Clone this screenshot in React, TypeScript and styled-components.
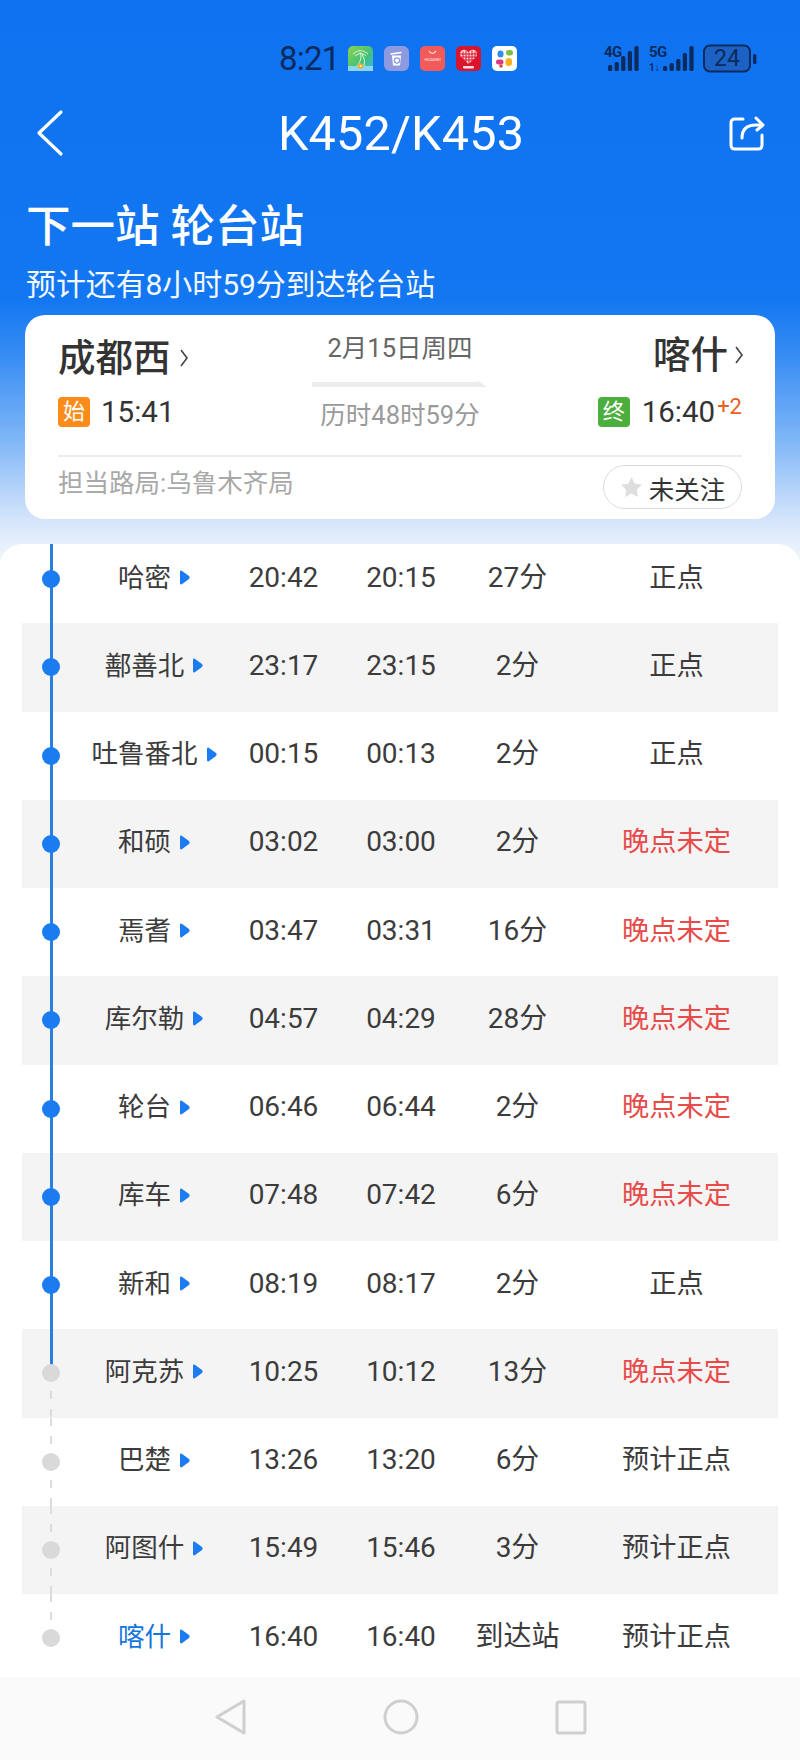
import React from "react";
import styled, { createGlobalStyle } from "styled-components";

const FONT = `Roboto, "Noto Sans CJK SC", sans-serif`;

const Global = createGlobalStyle`
  html, body { margin: 0; padding: 0; background: #fff; }
  * { box-sizing: border-box; }
`;

const Page = styled.div`
  width: 800px;
  height: 1760px;
  overflow: hidden;
  display: flex;
  flex-direction: column;
  font-family: ${FONT};
  color: #3a3a3a;
  background: linear-gradient(180deg, #0f72f0 0, #1277f1 300px, #3a8ff4 360px, #80b6f7 440px, #d5e5fb 520px, #f2f6fd 560px);
`;

const StatusBar = styled.div`
  height: 102px;
  padding: 44px 0 0 279px;
  display: flex;
  align-items: flex-start;
`;
const Clock = styled.div`
  width: 69px;
  height: 30px;
  line-height: 30px;
  font-size: 33px;
  letter-spacing: -0.8px;
  color: #0b2a5e;
`;
const AppIcons = styled.div`
  display: flex;
  gap: 11px;
  margin-top: 2px;
`;
const Signals = styled.div`
  margin-left: 87px;
  margin-top: -3px;
  display: flex;
`;

const Nav = styled.div`
  height: 60px;
  padding: 0 34px 0 36px;
  display: grid;
  grid-template-columns: 1fr auto 1fr;
  align-items: center;
`;
const NavRight = styled.div`
  display: flex;
  justify-content: flex-end;
`;
const NavLeft = styled.div`
  display: flex;
`;
const Title = styled.div`
  font-size: 48.5px;
  line-height: 60px;
  padding-top: 2px;
  color: #fff;
  letter-spacing: 0.2px;
`;
const Headline = styled.div`
  margin: 35px 0 0 26px;
  height: 60px;
  line-height: 60px;
  font-size: 44.5px;
  font-weight: 500;
  color: #fff;
`;
const Subline = styled.div`
  margin: 8px 0 0 26px;
  height: 40px;
  line-height: 40px;
  font-size: 30px;
  color: #f4f8ff;
  letter-spacing: -0.1px;
`;

const SummaryCard = styled.section`
  margin: 10px 25px 0;
  height: 204px;
  padding: 0 33px;
  background: #fff;
  border-radius: 20px;
`;
const RouteGrid = styled.div`
  display: grid;
  grid-template-columns: 1fr auto 1fr;
  height: 118px;
`;
const Endpoint = styled.div<{ $end?: boolean }>`
  display: flex;
  flex-direction: column;
  align-items: ${(p) => (p.$end ? "flex-end" : "flex-start")};
  padding-top: ${(p) => (p.$end ? 19 : 22)}px;
`;
const CityLine = styled.div<{ $end?: boolean }>`
  height: 42px;
  display: flex;
  align-items: center;
  gap: ${(p) => (p.$end ? 6 : 8)}px;
  margin-right: ${(p) => (p.$end ? -2 : 0)}px;
`;
const City = styled.span`
  font-size: 37.5px;
  line-height: 42px;
  font-weight: 500;
  color: #333;
`;
const TimeLine = styled.div<{ $end?: boolean }>`
  height: 42px;
  margin-top: ${(p) => (p.$end ? 15 : 12)}px;
  display: flex;
  align-items: center;
  gap: ${(p) => (p.$end ? 12 : 11)}px;
`;
const Badge = styled.span<{ $color: string }>`
  width: 32px;
  height: 30px;
  border-radius: 4px;
  background: ${(p) => p.$color};
  color: #fff;
  font-size: 22px;
  line-height: 30px;
  text-align: center;
`;
const BigTime = styled.span`
  font-size: 29.5px;
  line-height: 40px;
  color: #333;
`;
const PlusDay = styled.sup`
  font-size: 22px;
  line-height: 1;
  color: #e5611c;
  margin-left: 2px;
  vertical-align: 8px;
`;
const Middle = styled.div`
  width: 176px;
  padding-top: 18px;
  display: flex;
  flex-direction: column;
  align-items: center;
`;
const DateText = styled.div`
  height: 30px;
  line-height: 30px;
  font-size: 25.5px;
  color: #666;
  white-space: nowrap;
`;
const ArrowWrap = styled.div`
  margin-top: 17px;
  height: 6px;
  display: flex;
`;
const Duration = styled.div`
  margin-top: 14px;
  height: 30px;
  line-height: 30px;
  font-size: 25.5px;
  color: #9a9a9a;
  white-space: nowrap;
`;
const Divider = styled.div`
  margin-top: 22px;
  height: 2px;
  background: #ececec;
`;
const CardFoot = styled.div`
  margin-top: 8px;
  display: flex;
  align-items: center;
  justify-content: space-between;
`;
const Bureau = styled.div`
  font-size: 25.5px;
  line-height: 30px;
  color: #a8a8a8;
  padding-bottom: 8px;
`;
const FollowPill = styled.div`
  width: 139px;
  height: 44px;
  border: 1px solid #dcdcdc;
  border-radius: 22px;
  display: flex;
  align-items: center;
  justify-content: center;
  gap: 6px;
  font-size: 25.5px;
  color: #333;
`;

const ListCard = styled.section`
  margin-top: 25px;
  height: 1133px;
  background: #fff;
  border-radius: 22px 22px 0 0;
  overflow: hidden;
`;
const Rows = styled.div`
  margin-top: -9px;
`;
const Row = styled.div<{ $shaded: boolean }>`
  height: 88.25px;
  margin: 0 22px;
  display: grid;
  grid-template-columns: 60px 144px 115px 120px 113px 1fr;
  align-items: center;
  text-align: center;
  background: ${(p) => (p.$shaded ? "#f4f4f4" : "transparent")};
`;
const dashed = "repeating-linear-gradient(180deg, #dcdcdc 0 8px, transparent 8px 18px)";
const Rail = styled.div`
  position: relative;
  align-self: stretch;
`;
const RailLine = styled.div<{ $part: "top" | "bottom"; $kind: "solid" | "dashed" }>`
  position: absolute;
  left: 28px;
  width: ${(p) => (p.$kind === "solid" ? 2.5 : 2)}px;
  top: ${(p) => (p.$part === "top" ? "0" : "50%")};
  height: 50%;
  background: ${(p) => (p.$kind === "solid" ? "#2a80dc" : dashed)};
`;
const Dot = styled.div<{ $passed: boolean }>`
  position: absolute;
  left: 20px;
  top: 50%;
  width: 18px;
  height: 18px;
  margin-top: -9px;
  border-radius: 50%;
  background: ${(p) => (p.$passed ? "#1a7cf0" : "#d9d9d9")};
`;
const Cell = styled.div<{ $color?: string }>`
  font-size: 28px;
  line-height: 36px;
  padding-bottom: 3px;
  white-space: nowrap;
  color: ${(p) => p.$color || "#3c3c3c"};
`;
const Station = styled(Cell)`
  font-size: 26.5px;
  display: flex;
  align-items: center;
  justify-content: center;
  gap: 9px;
`;
const StatusCell = styled(Cell)`
  font-size: 27.2px;
  padding-left: 1px;
`;
const NavBar = styled.footer`
  flex: 1;
  background: #fafafa;
  padding: 22px 0 0 215px;
  display: flex;
  align-items: flex-start;
`;
const NavSlot = styled.div<{ $gap: number }>`
  margin-left: ${(p) => p.$gap}px;
  height: 36px;
  display: flex;
`;

const Chevron = () => (
  <svg width="10" height="22" viewBox="0 0 10 22" fill="none" stroke="#444" strokeWidth="1.6">
    <path d="M2 3 L8 11 L2 19" />
  </svg>
);

const Tri = () => (
  <svg width="10" height="15" viewBox="0 0 10 15">
    <path d="M1.8 0.8 L9 6 Q10.2 7.5 9 9 L1.8 14.2 Q0 15 0 13 V2 Q0 0 1.8 0.8 Z" fill="#1a7cf0" />
  </svg>
);

const GreenApp = () => (
  <svg width="25" height="25" viewBox="0 0 25 25">
    <defs>
      <linearGradient id="ga" x1="0" y1="0" x2="1" y2="1">
        <stop offset="0" stopColor="#8fd24a" />
        <stop offset="0.6" stopColor="#41c07e" />
        <stop offset="1" stopColor="#3cb8e6" />
      </linearGradient>
    </defs>
    <rect width="25" height="25" rx="5" fill="url(#ga)" />
    <path d="M5 8 Q12 1 20 8 M7 10 Q13 5 18 10 M12 6 Q15 13 9 20 M14 8 Q18 14 16 20" fill="none" stroke="#e8f8d8" strokeWidth="0.9" />
    <rect y="20" width="25" height="5" fill="#8ad8ee" />
    <circle cx="12.5" cy="20" r="2.8" fill="#f7a823" />
    <circle cx="12.5" cy="20" r="1" fill="#fff" />
  </svg>
);
const TrashApp = () => (
  <svg width="25" height="25" viewBox="0 0 25 25">
    <rect width="25" height="25" rx="6" fill="#8e9ae0" />
    <path d="M7 8 L17 6.5" stroke="#fff" strokeWidth="1.6" strokeLinecap="round" />
    <path d="M8 9.5 H17 L16 19.5 H9 Z" fill="#fff" />
    <circle cx="13" cy="14.5" r="2.6" fill="none" stroke="#8e9ae0" strokeWidth="1.3" />
  </svg>
);
const ShopApp = () => (
  <svg width="25" height="25" viewBox="0 0 25 25">
    <rect width="25" height="25" rx="5" fill="#f35b5b" />
    <path d="M9 5 Q12.5 10 16 5" fill="none" stroke="#fff" strokeWidth="1.1" />
    <text x="12.5" y="15" textAnchor="middle" fontSize="4.4" fontFamily="Roboto, sans-serif" fill="#ffe9e9">HUAWEI</text>
  </svg>
);
const HeartApp = () => (
  <svg width="25" height="25" viewBox="0 0 25 25">
    <rect width="25" height="25" rx="5" fill="#d9142c" />
    <path d="M12.5 18 L4.5 10.5 Q2.8 5 7.5 3.8 Q11 3.4 12.5 6.5 Q14 3.4 17.5 3.8 Q22.2 5 20.5 10.5 Z" fill="#fbd9d9" />
    <path d="M7 5.5 V14 M10 4.5 V16.5 M13 6.5 V18 M16 4.5 V15.5 M19 5.5 V12 M4 8 H21 M4.5 11 H20.5 M7 14 H18" stroke="#d9142c" strokeWidth="1" />
    <rect x="7" y="20" width="11" height="2.4" rx="0.8" fill="#ffd9d9" />
  </svg>
);
const BlobApp = () => (
  <svg width="25" height="25" viewBox="0 0 25 25">
    <rect width="25" height="25" rx="5" fill="#fff" />
    <rect x="5.5" y="4.5" width="6" height="7" rx="3" fill="#2e8ee8" />
    <rect x="14" y="4" width="7" height="5.5" rx="2.7" fill="#7cc144" />
    <rect x="4" y="13.5" width="7.5" height="5" rx="2.5" fill="#d63a86" />
    <rect x="13.5" y="12" width="6.5" height="8" rx="3.2" fill="#f7b21e" />
    <circle cx="9" cy="20" r="1.8" fill="#e04545" />
  </svg>
);

const bars = (x0: number, hs: number[]) =>
  hs.map((h, i) => <rect key={i} x={x0 + i * 6.6} y={25 - h} width="4.2" height={h} rx="1.6" fill="#0b2a5e" />);

const StatusIndicators = () => (
  <svg width="158" height="34" viewBox="0 0 158 34">
    <g transform="translate(0,5)">
      <text x="0" y="11" fontSize="15" fontWeight="700" fontFamily="Roboto, sans-serif" fill="#0b2a5e" letterSpacing="-0.5">4G</text>
      {bars(4, [6, 9, 15, 20, 25])}
      <text x="45" y="11" fontSize="15" fontWeight="700" fontFamily="Roboto, sans-serif" fill="#0b2a5e" letterSpacing="-0.5">5G</text>
      <text x="45" y="25" fontSize="10" fontWeight="700" fontFamily="Roboto, sans-serif" fill="#0b2a5e">1↓</text>
      {bars(59, [5, 8, 12, 18, 25])}
      <rect x="100" y="-0.5" width="46" height="26" rx="6" fill="#1c62c4" stroke="#0b2a5e" strokeWidth="2" />
      <text x="123" y="20" textAnchor="middle" fontSize="23" fontFamily="Roboto, sans-serif" fill="#0b2a5e">24</text>
      <rect x="149" y="8" width="3.4" height="10" rx="1.5" fill="#0b2a5e" />
    </g>
  </svg>
);

const BackIcon = () => (
  <svg width="28" height="48" viewBox="0 0 28 48" fill="none" stroke="#fff" strokeWidth="3.2" strokeLinecap="round" strokeLinejoin="round">
    <path d="M25 3 L3 24 L25 45" />
  </svg>
);
const ShareIcon = () => (
  <svg width="38" height="38" viewBox="0 0 38 38" fill="none" stroke="#fff" strokeWidth="3" strokeLinecap="round" strokeLinejoin="round">
    <path d="M15 5 H7 Q3 5 3 9 V31 Q3 35 7 35 H30 Q34 35 34 31 V21" />
    <path d="M14 24 Q14 11 28 11 H34" />
    <path d="M28 4 L35 11 L29 16" />
  </svg>
);
const Star = () => (
  <svg width="23" height="22" viewBox="0 0 24 23">
    <path d="M12 1 L15.4 8 L23 9 L17.5 14.4 L18.8 22 L12 18.4 L5.2 22 L6.5 14.4 L1 9 L8.6 8 Z" fill="#dedede" />
  </svg>
);
const RouteArrow = () => (
  <svg width="176" height="7" viewBox="0 0 176 7">
    <path d="M0 2 H166 L165 0 L175 7 H0 Z" fill="#ececec" />
  </svg>
);

type Stop = { name: string; arr: string; dep: string; stay: string; status: string; blue?: boolean };
const STOPS: Stop[] = [
  { name: "哈密", arr: "20:42", dep: "20:15", stay: "27分", status: "正点" },
  { name: "鄯善北", arr: "23:17", dep: "23:15", stay: "2分", status: "正点" },
  { name: "吐鲁番北", arr: "00:15", dep: "00:13", stay: "2分", status: "正点" },
  { name: "和硕", arr: "03:02", dep: "03:00", stay: "2分", status: "晚点未定" },
  { name: "焉耆", arr: "03:47", dep: "03:31", stay: "16分", status: "晚点未定" },
  { name: "库尔勒", arr: "04:57", dep: "04:29", stay: "28分", status: "晚点未定" },
  { name: "轮台", arr: "06:46", dep: "06:44", stay: "2分", status: "晚点未定" },
  { name: "库车", arr: "07:48", dep: "07:42", stay: "6分", status: "晚点未定" },
  { name: "新和", arr: "08:19", dep: "08:17", stay: "2分", status: "正点" },
  { name: "阿克苏", arr: "10:25", dep: "10:12", stay: "13分", status: "晚点未定" },
  { name: "巴楚", arr: "13:26", dep: "13:20", stay: "6分", status: "预计正点" },
  { name: "阿图什", arr: "15:49", dep: "15:46", stay: "3分", status: "预计正点" },
  { name: "喀什", arr: "16:40", dep: "16:40", stay: "到达站", status: "预计正点", blue: true },
];
const REACHED = 9;

export default function App() {
  return (
    <Page>
      <Global />
      <StatusBar>
        <Clock>8:21</Clock>
        <AppIcons>
          <GreenApp />
          <TrashApp />
          <ShopApp />
          <HeartApp />
          <BlobApp />
        </AppIcons>
        <Signals>
          <StatusIndicators />
        </Signals>
      </StatusBar>
      <Nav>
        <NavLeft>
          <BackIcon />
        </NavLeft>
        <Title>K452/K453</Title>
        <NavRight>
          <ShareIcon />
        </NavRight>
      </Nav>
      <Headline>下一站 轮台站</Headline>
      <Subline>预计还有8小时59分到达轮台站</Subline>
      <SummaryCard>
        <RouteGrid>
          <Endpoint>
            <CityLine>
              <City>成都西</City>
              <Chevron />
            </CityLine>
            <TimeLine>
              <Badge $color="#fb8c1a">始</Badge>
              <BigTime>15:41</BigTime>
            </TimeLine>
          </Endpoint>
          <Middle>
            <DateText>2月15日周四</DateText>
            <ArrowWrap>
              <RouteArrow />
            </ArrowWrap>
            <Duration>历时48时59分</Duration>
          </Middle>
          <Endpoint $end>
            <CityLine $end>
              <City>喀什</City>
              <Chevron />
            </CityLine>
            <TimeLine $end>
              <Badge $color="#4cae3d">终</Badge>
              <BigTime>
                16:40<PlusDay>+2</PlusDay>
              </BigTime>
            </TimeLine>
          </Endpoint>
        </RouteGrid>
        <Divider />
        <CardFoot>
          <Bureau>担当路局:乌鲁木齐局</Bureau>
          <FollowPill>
            <Star />
            未关注
          </FollowPill>
        </CardFoot>
      </SummaryCard>
      <ListCard>
        <Rows>
          {STOPS.map((s, i) => (
            <Row key={s.name} $shaded={i % 2 === 1}>
              <Rail>
                <RailLine $part="top" $kind={i <= REACHED ? "solid" : "dashed"} />
                {i < STOPS.length - 1 && <RailLine $part="bottom" $kind={i < REACHED ? "solid" : "dashed"} />}
                <Dot $passed={i < REACHED} />
              </Rail>
              <Station $color={s.blue ? "#1675dc" : undefined}>
                {s.name}
                <Tri />
              </Station>
              <Cell>{s.arr}</Cell>
              <Cell>{s.dep}</Cell>
              <Cell>{s.stay}</Cell>
              <StatusCell $color={s.status === "晚点未定" ? "#e84a4a" : undefined}>{s.status}</StatusCell>
            </Row>
          ))}
        </Rows>
      </ListCard>
      <NavBar>
        <svg width="32" height="36" viewBox="0 0 32 36" fill="none" stroke="#cfcfcf" strokeWidth="3" strokeLinejoin="round">
          <path d="M29 2 V34 L2 18 Z" />
        </svg>
        <NavSlot $gap={136}>
          <svg width="36" height="36" viewBox="0 0 36 36" fill="none" stroke="#cfcfcf" strokeWidth="3">
            <circle cx="18" cy="18" r="16" />
          </svg>
        </NavSlot>
        <NavSlot $gap={136}>
          <svg width="32" height="36" viewBox="0 0 32 36" fill="none" stroke="#cfcfcf" strokeWidth="3" strokeLinejoin="round">
            <rect x="2" y="3" width="28" height="31" rx="2" />
          </svg>
        </NavSlot>
      </NavBar>
    </Page>
  );
}
